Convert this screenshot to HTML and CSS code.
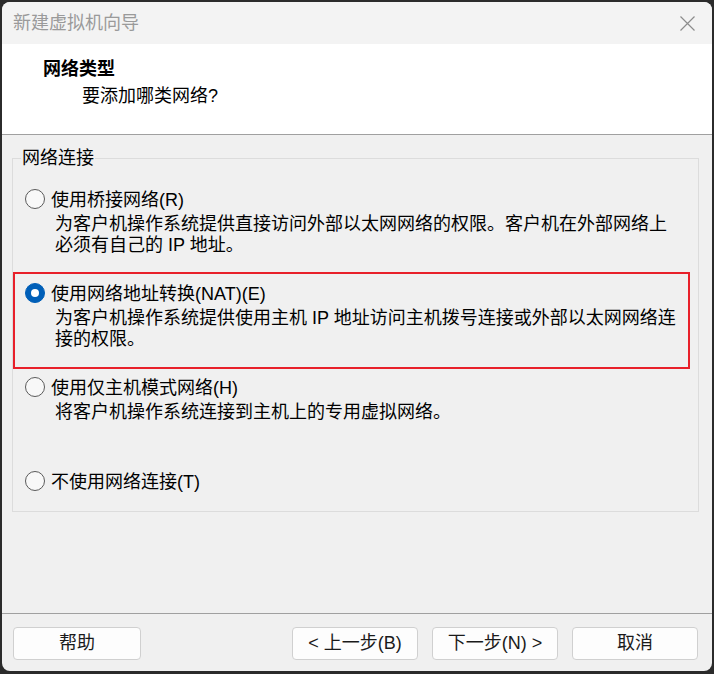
FILE: index.html
```html
<!DOCTYPE html>
<html lang="zh-CN">
<head>
<meta charset="utf-8">
<title>新建虚拟机向导</title>
<link rel="stylesheet" href="styles.css">
</head>
<body>
<div class="window">
  <div class="titlebar">
    <span class="title">新建虚拟机向导</span>
    <svg class="close" width="15" height="15" viewBox="0 0 15 15"><path d="M0.5 0.5L14.5 14.5M14.5 0.5L0.5 14.5" stroke="#8c8c8c" stroke-width="1.2" fill="none"/></svg>
  </div>
  <div class="header">
    <div class="h-title">网络类型</div>
    <div class="h-sub">要添加哪类网络?</div>
  </div>
  <div class="content">
    <fieldset class="group">
      <legend>网络连接</legend>
      <div class="options">
        <div class="option">
          <div class="opt-row"><span class="radio"></span><span class="opt-label">使用桥接网络(R)</span></div>
          <div class="opt-desc">为客户机操作系统提供直接访问外部以太网网络的权限。客户机在外部网络上<br>必须有自己的 IP 地址。</div>
        </div>
        <div class="option">
          <div class="highlight"></div>
          <div class="opt-row"><span class="radio checked"></span><span class="opt-label">使用网络地址转换(NAT)(E)</span></div>
          <div class="opt-desc">为客户机操作系统提供使用主机 IP 地址访问主机拨号连接或外部以太网网络连<br>接的权限。</div>
        </div>
        <div class="option">
          <div class="opt-row"><span class="radio"></span><span class="opt-label">使用仅主机模式网络(H)</span></div>
          <div class="opt-desc">将客户机操作系统连接到主机上的专用虚拟网络。</div>
        </div>
        <div class="option">
          <div class="opt-row"><span class="radio"></span><span class="opt-label">不使用网络连接(T)</span></div>
        </div>
      </div>
    </fieldset>
  </div>
  <div class="footer">
    <button class="btn btn-help">帮助</button>
    <div class="btn-group">
      <button class="btn">&lt; 上一步(B)</button>
      <button class="btn">下一步(N) &gt;</button>
      <button class="btn">取消</button>
    </div>
  </div>
</div>
</body>
</html>
```

FILE: styles.css
```css
html, body {
  margin: 0;
  height: 100%;
}
body {
  background: #2b2b2b;
  padding: 2px 2px 3px 2px;
  box-sizing: border-box;
  font-family: "Liberation Sans", "Noto Sans CJK SC", sans-serif;
  font-size: 18px;
  color: #000;
}
.window {
  width: 710px;
  height: 669px;
  background: #f0f0f0;
  border-radius: 8px;
  overflow: hidden;
  display: flex;
  flex-direction: column;
}
.titlebar {
  height: 42px;
  flex: none;
  background: #f3f3f3;
  display: flex;
  align-items: center;
  justify-content: space-between;
  padding: 0 17px 0 11px;
}
.title {
  color: #9a9a9a;
  font-size: 18px;
  line-height: 22px;
}
.close {
  display: block;
}
.header {
  flex: none;
  box-sizing: border-box;
  height: 91px;
  background: #fff;
  border-bottom: 1px solid #a0a0a0;
  padding-top: 15px;
}
.h-title {
  padding-left: 41px;
  font-weight: bold;
  line-height: 21px;
}
.h-sub {
  margin-top: 6px;
  padding-left: 80px;
  line-height: 21px;
}
.content {
  flex: 1;
  padding: 12px 13px 0 10px;
}
.group {
  margin: 0;
  padding: 0;
  min-width: 0;
  border: 1px solid #dcdcdc;
}
.group legend {
  margin-left: 8px;
  padding: 0 1px;
  line-height: 22px;
}
.options {
  padding: 19px 10px 19px 12px;
}
.option {
  position: relative;
  height: 94px;
}
.option:last-child {
  height: auto;
}
.opt-row {
  display: flex;
  align-items: center;
  height: 22px;
  line-height: 22px;
}
.opt-label {
  padding-top: 1px;
}
.radio {
  flex: none;
  width: 20px;
  height: 20px;
  box-sizing: border-box;
  border: 1px solid #5a5a5a;
  border-radius: 50%;
  background: #f8f8f8;
  margin-right: 6px;
}
.radio.checked {
  background: #005fb8;
  border-color: #005fb8;
  display: flex;
  align-items: center;
  justify-content: center;
}
.radio.checked::after {
  content: "";
  width: 8px;
  height: 8px;
  border-radius: 50%;
  background: #fff;
}
.opt-desc {
  margin-top: 4px;
  padding-left: 30px;
  line-height: 21px;
  white-space: nowrap;
}
.highlight {
  position: absolute;
  left: -12px;
  top: -10px;
  width: 677px;
  height: 97px;
  box-sizing: border-box;
  border: 2px solid #e8202a;
  pointer-events: none;
}
.footer {
  flex: none;
  border-top: 1px solid #a0a0a0;
  padding: 13px 14px 11px 11px;
  display: flex;
  justify-content: space-between;
}
.btn-group {
  display: flex;
  gap: 14px;
}
.btn {
  width: 126px;
  height: 33px;
  box-sizing: border-box;
  background: #fdfdfd;
  border: 1px solid #d0d0d0;
  border-radius: 4px;
  font: inherit;
  color: #1a1a1a;
  line-height: 21px;
  padding: 0;
}
.btn-help {
  width: 128px;
}
```
